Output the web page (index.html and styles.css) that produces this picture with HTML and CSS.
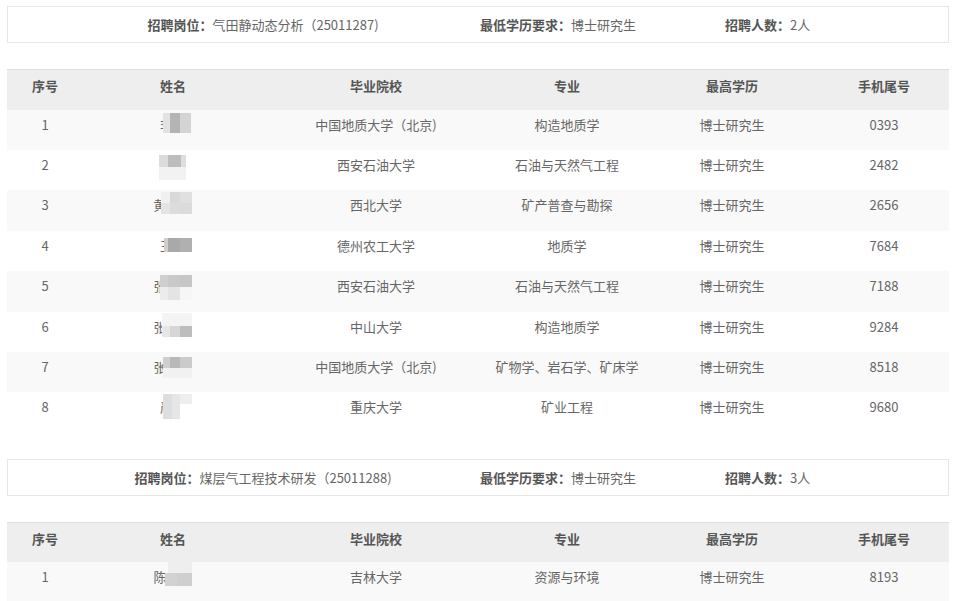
FILE: index.html
```
<!DOCTYPE html>
<html lang="zh-CN">
<head>
<meta charset="utf-8">
<title>招聘公示</title>
<link rel="stylesheet" href="styles.css">
</head>
<body>
<div class="page">
  <section class="post">
    <div class="info">
      <div class="info-item"><b>招聘岗位：</b>气田静动态分析（25011287)</div>
      <div class="info-item"><b>最低学历要求：</b>博士研究生</div>
      <div class="info-item"><b>招聘人数：</b>2人</div>
    </div>
    <table class="list">
      <colgroup><col class="c1"><col class="c2"><col class="c3"><col class="c4"><col class="c5"><col class="c6"></colgroup>
      <thead><tr><th>序号</th><th>姓名</th><th>毕业院校</th><th>专业</th><th>最高学历</th><th>手机尾号</th></tr></thead>
      <tbody>
        <tr><td>1</td><td class="name"><span class="n2">李</span><svg class="mosaic" width="40" height="40" viewBox="0 0 40 40"><rect x="6" y="3" width="7" height="20" fill="#e2e2e2"/><rect x="13" y="3" width="10" height="20" fill="#b4b4b4"/><rect x="23" y="3" width="11" height="20" fill="#d4d4d4"/></svg></td><td>中国地质大学（北京)</td><td>构造地质学</td><td>博士研究生</td><td>0393</td></tr>
        <tr><td>2</td><td class="name"><span class="n2">李</span><svg class="mosaic" width="40" height="40" viewBox="0 0 40 40"><rect x="2" y="5" width="9" height="12" fill="#dcdcdc"/><rect x="11" y="5" width="13" height="12" fill="#bdbdbd"/><rect x="24" y="5" width="5" height="12" fill="#dedede"/><rect x="2" y="17" width="27" height="13" fill="#f2f2f2"/></svg></td><td>西安石油大学</td><td>石油与天然气工程</td><td>博士研究生</td><td>2482</td></tr>
        <tr><td>3</td><td class="name"><span class="n3">黄</span><svg class="mosaic" width="40" height="40" viewBox="0 0 40 40"><rect x="4" y="2" width="9" height="11" fill="#f0f0f0"/><rect x="13" y="2" width="10" height="11" fill="#d9d9d9"/><rect x="23" y="2" width="12" height="11" fill="#e0e0e0"/><rect x="4" y="13" width="9" height="11" fill="#e4e4e4"/><rect x="13" y="13" width="10" height="11" fill="#dcdcdc"/><rect x="23" y="13" width="12" height="11" fill="#dbdbdb"/></svg></td><td>西北大学</td><td>矿产普查与勘探</td><td>博士研究生</td><td>2656</td></tr>
        <tr><td>4</td><td class="name"><span class="n2">王</span><svg class="mosaic" width="40" height="40" viewBox="0 0 40 40"><rect x="7" y="7" width="4" height="14" fill="#d0cdcb"/><rect x="11" y="7" width="12" height="14" fill="#a9a9a9"/><rect x="23" y="7" width="12" height="14" fill="#b0b0b0"/></svg></td><td>德州农工大学</td><td>地质学</td><td>博士研究生</td><td>7684</td></tr>
        <tr><td>5</td><td class="name"><span class="n3">张</span><svg class="mosaic" width="40" height="40" viewBox="0 0 40 40"><rect x="3" y="4" width="8" height="12" fill="#cfcfcf"/><rect x="11" y="4" width="12" height="12" fill="#c9c9c9"/><rect x="23" y="4" width="12" height="12" fill="#c6c6c6"/><rect x="3" y="16" width="8" height="13" fill="#ececec"/><rect x="11" y="16" width="12" height="13" fill="#e4e4e4"/><rect x="23" y="16" width="12" height="13" fill="#f6f6f6"/></svg></td><td>西安石油大学</td><td>石油与天然气工程</td><td>博士研究生</td><td>7188</td></tr>
        <tr><td>6</td><td class="name"><span class="n3">张</span><svg class="mosaic" width="40" height="40" viewBox="0 0 40 40"><rect x="5" y="1" width="30" height="13" fill="#f4f4f4"/><rect x="5" y="14" width="8" height="11" fill="#e6e6e6"/><rect x="13" y="14" width="10" height="11" fill="#d6d6d6"/><rect x="23" y="14" width="12" height="11" fill="#bdbdbd"/></svg></td><td>中山大学</td><td>构造地质学</td><td>博士研究生</td><td>9284</td></tr>
        <tr><td>7</td><td class="name"><span class="n3">张</span><svg class="mosaic" width="40" height="40" viewBox="0 0 40 40"><rect x="6" y="5" width="7" height="11" fill="#cfcfcf"/><rect x="13" y="5" width="10" height="11" fill="#b9b9b9"/><rect x="23" y="5" width="12" height="11" fill="#cbcbcb"/><rect x="6" y="16" width="29" height="10" fill="#f1f1f1"/></svg></td><td>中国地质大学（北京)</td><td>矿物学、岩石学、矿床学</td><td>博士研究生</td><td>8518</td></tr>
        <tr><td>8</td><td class="name"><span class="n2">严</span><svg class="mosaic" width="40" height="40" viewBox="0 0 40 40"><rect x="6" y="2" width="9" height="25" fill="#dedede"/><rect x="15" y="2" width="8" height="25" fill="#e6e6e6"/><rect x="23" y="2" width="12" height="10" fill="#eeeeee"/></svg></td><td>重庆大学</td><td>矿业工程</td><td>博士研究生</td><td>9680</td></tr>
      </tbody>
    </table>
  </section>

  <section class="post">
    <div class="info">
      <div class="info-item"><b>招聘岗位：</b>煤层气工程技术研发（25011288)</div>
      <div class="info-item"><b>最低学历要求：</b>博士研究生</div>
      <div class="info-item"><b>招聘人数：</b>3人</div>
    </div>
    <table class="list">
      <colgroup><col class="c1"><col class="c2"><col class="c3"><col class="c4"><col class="c5"><col class="c6"></colgroup>
      <thead><tr><th>序号</th><th>姓名</th><th>毕业院校</th><th>专业</th><th>最高学历</th><th>手机尾号</th></tr></thead>
      <tbody>
        <tr><td>1</td><td class="name"><span class="n3">陈</span><svg class="mosaic" width="40" height="40" viewBox="0 0 40 40"><rect x="11" y="0" width="24" height="11" fill="#eeeeee"/><rect x="8" y="11" width="12" height="13" fill="#d2d2d2"/><rect x="20" y="11" width="15" height="13" fill="#cfcfcf"/></svg></td><td>吉林大学</td><td>资源与环境</td><td>博士研究生</td><td>8193</td></tr>
      </tbody>
    </table>
  </section>
</div>
</body>
</html>
```

FILE: styles.css
```
html, body {
  margin: 0;
  padding: 0;
  background: #fff;
}
body {
  font-family: "Noto Sans CJK SC", "Noto Sans", sans-serif;
  font-size: 13px;
  color: #666;
}
.page {
  width: 942px;
  margin-left: 7px;
  padding-top: 6px;
}
.post {
  margin-bottom: 26px;
}
.info {
  display: grid;
  grid-template-columns: 390px 223px 1fr;
  column-gap: 22px;
  height: 35px;
  padding-left: 60px;
  border: 1px solid #e6e6e6;
  line-height: 36px;
  color: #666;
  margin-bottom: 26px;
}
.info-item {
  white-space: nowrap;
}
.info-item:first-child {
  text-align: center;
}
.info-item b {
  color: #555;
  font-weight: bold;
}
.list {
  width: 942px;
  table-layout: fixed;
  border-collapse: collapse;
  border-spacing: 0;
}
.c1 { width: 76px; }
.c2 { width: 180px; }
.c3 { width: 226px; }
.c4 { width: 156px; }
.c5 { width: 174px; }
.c6 { width: 130px; }
.list thead tr {
  background: #eeeeee;
  border-top: 1px solid #dedede;
}
.list th {
  height: 40px;
  padding: 6px 0 0;
  box-sizing: border-box;
  vertical-align: top;
  line-height: 20px;
  font-weight: bold;
  color: #555;
  text-align: center;
}
.list tbody tr {
  height: 40.43px;
}
.list tbody tr:nth-child(odd) {
  background: #f9f9f9;
}
.list td {
  padding: 5px 0 0;
  vertical-align: top;
  line-height: 20px;
  text-align: center;
  white-space: nowrap;
}
.list td.name {
  position: relative;
}
.n2, .n3 {
  display: inline-block;
  text-align: left;
}
.n2 { width: 26px; }
.n3 { width: 39px; }
.mosaic {
  position: absolute;
  left: calc(50% - 16px);
  top: 0;
}
```
